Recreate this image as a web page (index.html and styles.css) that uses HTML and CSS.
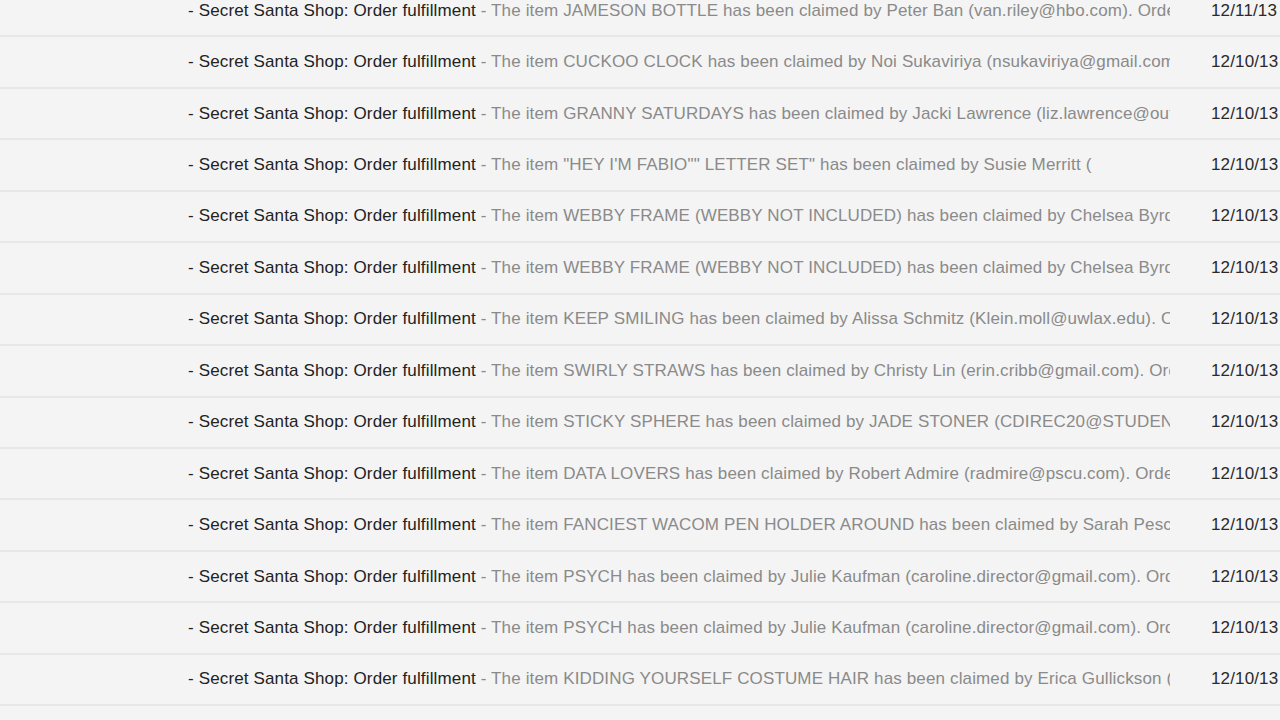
FILE: index.html
```html
<!DOCTYPE html>
<html lang="en">
<head>
<meta charset="UTF-8" />
<meta name="viewport" content="width=device-width, initial-scale=1" />
<title>Inbox - Secret Santa Shop</title>
<link rel="stylesheet" href="styles.css">
</head>
<body>

<div class="mail-list" id="mail-list">
  <!-- Rows rendered below -->
</div>

<script>
// Order fulfillment notices (snippets as shown in the list)
const mails = [
  { item: 'JAMESON BOTTLE has been claimed by Peter Ban (van.riley@hbo.com). Order', date: '12/11/13' },
  { item: 'CUCKOO CLOCK has been claimed by Noi Sukaviriya (nsukaviriya@gmail.com). Order', date: '12/10/13' },
  { item: 'GRANNY SATURDAYS has been claimed by Jacki Lawrence (liz.lawrence@outlook.com)', date: '12/10/13' },
  { item: '"HEY I\'M FABIO"" LETTER SET" has been claimed by Susie Merritt (', date: '12/10/13' },
  { item: 'WEBBY FRAME (WEBBY NOT INCLUDED) has been claimed by Chelsea Byrd', date: '12/10/13' },
  { item: 'WEBBY FRAME (WEBBY NOT INCLUDED) has been claimed by Chelsea Byrd', date: '12/10/13' },
  { item: 'KEEP SMILING has been claimed by Alissa Schmitz (Klein.moll@uwlax.edu). Order', date: '12/10/13' },
  { item: 'SWIRLY STRAWS has been claimed by Christy Lin (erin.cribb@gmail.com). Order', date: '12/10/13' },
  { item: 'STICKY SPHERE has been claimed by JADE STONER (CDIREC20@STUDENT.EDU)', date: '12/10/13' },
  { item: 'DATA LOVERS has been claimed by Robert Admire (radmire@pscu.com). Order', date: '12/10/13' },
  { item: 'FANCIEST WACOM PEN HOLDER AROUND has been claimed by Sarah Pesce', date: '12/10/13' },
  { item: 'PSYCH has been claimed by Julie Kaufman (caroline.director@gmail.com). Order', date: '12/10/13' },
  { item: 'PSYCH has been claimed by Julie Kaufman (caroline.director@gmail.com). Order', date: '12/10/13' },
  { item: 'KIDDING YOURSELF COSTUME HAIR has been claimed by Erica Gullickson (', date: '12/10/13' }
];

const list = document.getElementById('mail-list');

mails.forEach(mail => {
  const row = document.createElement('div');
  row.classList.add('mail-row');

  const subject = document.createElement('div');
  subject.classList.add('subject');

  const title = document.createElement('span');
  title.classList.add('title');
  title.textContent = '- Secret Santa Shop: Order fulfillment';

  const snippet = document.createElement('span');
  snippet.classList.add('snippet');
  snippet.textContent = ' - The item ' + mail.item;

  subject.appendChild(title);
  subject.appendChild(snippet);

  const date = document.createElement('div');
  date.classList.add('date');
  date.textContent = mail.date;

  row.appendChild(subject);
  row.appendChild(date);
  list.appendChild(row);
});
</script>

</body>
</html>
```

FILE: styles.css
```css
body {
  margin: 0;
  padding: 0;
  background: #f4f4f4;
  font-family: 'Liberation Sans', Arial, sans-serif;
  overflow: hidden;
}
.mail-list {
  margin-top: -14px;
}
.mail-row {
  display: flex;
  align-items: center;
  height: 51.45px;
  box-sizing: border-box;
  border-bottom: 2px solid #e7e7e7;
  padding-left: 188px;
  font-size: 17px;
  letter-spacing: 0.14px;
}
.subject {
  width: 982px;
  white-space: nowrap;
  overflow: hidden;
}
.title {
  color: #222;
}
.snippet {
  color: #8a8a8a;
}
.date {
  padding-left: 41px;
  color: #2a2a2a;
  white-space: nowrap;
}
```
